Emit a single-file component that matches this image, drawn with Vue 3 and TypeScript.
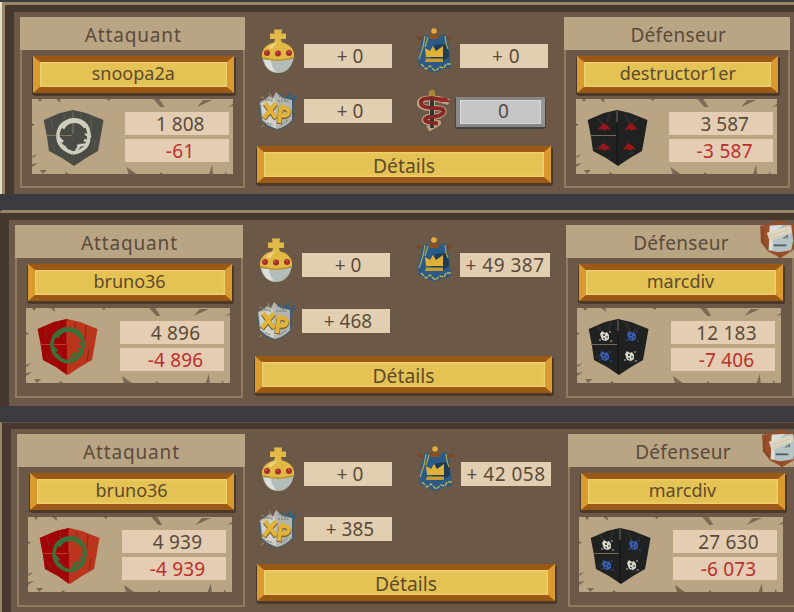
<template>
  <div class="reports">
    <svg class="sprites" aria-hidden="true">
      <symbol id="orb" viewBox="0 0 34 44">
        <path d="M1 26C2 38 9 44 17 44S32 38 33 26Z" fill="#b4bcba" />
        <path d="M3 31Q5 42 15 43Q10 37 10 31Z" fill="#dce0dc" />
        <path d="M1 24C3 17 9 13 17 13S31 17 33 24V29Q17 34 1 29Z" fill="#e0b843" />
        <path d="M13 14L14 10H9V4.500H13.500L13 .5H21L20.500 4.500H25V10H20L21 14Z" fill="#e3ba48" />
        <path d="M7 19Q11 14 17 14Q12 17 11 20Z" fill="#f0d580" />
        <path d="M1 28.500Q17 34 33 28.500" fill="none" stroke="#b7912e" stroke-width="1.5" />
        <circle cx="6" cy="24" r="3" fill="#a92c2c" />
        <circle cx="17" cy="24.5" r="3" fill="#a92c2c" />
        <circle cx="28" cy="24" r="3" fill="#a92c2c" />
        <path d="M4 22.500l2 1M15 23l2 1M27 22.500l2 1" stroke="#dd7169" />
      </symbol>
      <symbol id="xp" viewBox="0 0 40 42">
        <path d="M3 11Q0 19 4 31Q12 41 23 39Q35 34 36 26L36 12L40 5L32 8L34 1L26 8L24 4Z" fill="#385f75" />
        <path d="M2 12L8 9L11 6L15 8L18 2L22 6L25 8L34 10V30Q28 37 19 39Q9 36 4 30Z" fill="#b3b4ae" />
        <path d="M3 13L17 9L18 38Q8 35 5 29Z" fill="#d0d1ca" />
        <path d="M7 9l8 2M21 6l10 6M20 11h9M6 32l9 3M23 35l7-5" fill="none" stroke="#858985" stroke-width="1.5" stroke-dasharray="2 1" />
        <path d="M3 7l3 1M11 3l3 4M3 37l3-2" stroke="#8b8f89" />
        <path d="M7 14L18 29M18 14L6 29M23 18L21 34M21 18Q34 19 30 25Q27 28 23 26" fill="none" stroke="#7b6331" stroke-width="5" />
        <path d="M7 13L18 28M18 13L6 28M23 17L21 33M21 17Q34 18 30 24Q27 27 23 25" fill="none" stroke="#e2b336" stroke-width="4" />
      </symbol>
      <symbol id="banner" viewBox="0 0 36 45">
        <path d="M0 7L4 9H31L35 7V11L31 12H3L0 11Z" fill="#7b4726" />
        <path d="M6 7L13 8H22L28 6L31 14L34 37L33 40L26 41L18 45L10 42L2 38L1 29L4 17Z" fill="#2c5a86" />
        <path d="M18 17L31 16L32 29L25 34L13 33Z" fill="#1e3d52" />
        <path d="M8 8L6 19L2 31M11 9L8 19M28 8L29 15L31 21" fill="none" stroke="#a7a657" stroke-width="1.3" />
        <path d="M4 36L9 41L13 38L18 43L23 39L27 40L29 36L34 36" fill="none" stroke="#bcb452" stroke-width="1.4" stroke-dasharray="4 1" />
        <path d="M8 20L13 23L16 18L19 23L26 18V29H9Z" fill="#dfb137" />
        <path d="M9 30.500h17v3.500H8Z" fill="#c59b32" />
        <path d="M12 8Q18 5 22 8L21 11H13Z" fill="#925018" />
        <circle cx="17" cy="3" r="2.8" fill="#e5ae39" />
      </symbol>
      <symbol id="snake" viewBox="0 0 36 42">
        <path d="M15 3V38" stroke="#bfa284" stroke-width="6" />
        <path d="M32 13L21 10Q2 8 3 15Q4 19 17 19Q29 19 26 24Q23 28 11 28Q5 31 10 33L21 34L11 40" fill="none" stroke="#bfa284" stroke-width="6" stroke-linejoin="round" />
        <path d="M15 5V39" stroke="#25312e" stroke-width="3.500" />
        <path d="M24 10.500Q3 7 4 14Q4 18.500 17 19Q29 19 26 24Q23 28 11 28Q5 31 11 33L21 34.500" fill="none" stroke="#862825" stroke-width="4" />
        <path d="M20 8.500L29 8.500L34 13L23 13Z" fill="#932c28" />
        <path d="M15 13V17M15 22V26M15 30V32" stroke="#263632" stroke-width="3.500" />
        <circle cx="15" cy="4" r="3.2" fill="#a58736" />
      </symbol>
      <symbol id="wounded" viewBox="0 0 40 38">
        <path d="M0 5L9 3L19 0L30 3L40 5L39 22L34 30L21 38L8 31L1 22Z" fill="#99502a" />
        <path d="M3 7L2 21L8 28M20 38L20 31" fill="none" stroke="#834524" stroke-width="1.500" />
        <path d="M10 5L32 4L34 20L32 30L19 32L9 30Z" fill="#b5c3c5" />
        <path d="M10 5L24 4L13 12L13 30L9 30Z" fill="#d6dfdc" />
        <path d="M7 12L27 6L32 6V12L10 21Z" fill="#ddd6c0" />
        <path d="M8 16L29 9M10 19L27 13" stroke="#c6c0aa" stroke-width=".8" />
        <path d="M14 25H27" stroke="#4a5a60" stroke-width="1.800" />
        <path d="M24 18L28 15V18" fill="none" stroke="#6a7b80" stroke-width="1.500" />
      </symbol>
      <symbol id="cracks" viewBox="0 0 202 75">
        <path
          d="M6 0h4l-2 3ZM24 0l5 4-1-4ZM75 0h4l-2 2ZM122 0h6l5 8h-4ZM166 8l6-7h9ZM197 8l5-3v2ZM0 24l3 2-3 1ZM0 57l5-2-4 4ZM0 65l6-1-6 4ZM8 71h7l-4 4ZM34 73l3 2h-4ZM95 68l10 7h-8ZM130 73l1 2h-3ZM178 75l3-9 1 9ZM194 72l2 3h-2Z"
          fill="#7b6953"
        />
      </symbol>
    </svg>

    <section v-for="(report, i) in reports" :key="i" class="report" :class="'report-' + report.size">
      <div class="frame">
        <div class="card">
          <div class="title">Attaquant</div>
          <button class="gold">{{ report.attacker.name }}</button>
          <div class="parchment">
            <svg class="cracks" viewBox="0 0 202 75" preserveAspectRatio="none"><use href="#cracks" /></svg>
            <svg class="shield" viewBox="0 0 61 57">
              <path :d="shieldPath" :fill="report.attacker.arms === 'red' ? '#b9351c' : '#4b4b46'" />
              <path v-if="report.attacker.arms === 'red'" d="M.7 10L17 3L30 0V56L19 48L6 41L4 27Z" fill="#a00608" />
              <path d="M8 9l2 10M49 6l-1 14M38 3v10M12 41l-4-7M52 30l-2 12M21 3v8" :stroke="report.attacker.arms === 'red' ? '#86261a' : '#5b5b55'" />
              <path d="M3 25.5H29M30 2V24" :stroke="report.attacker.arms === 'red' ? '#c24c35' : '#8d8068'" stroke-width=".8" />
              <g fill="none" :stroke="report.attacker.arms === 'red' ? '#3b7039' : '#cfcebe'">
                <path d="M30 43Q14 38 15 24Q17 11 31 10Q45 11 46 24Q46 36 40 39Q35 43 30 43" stroke-width="3.500" />
                <path d="M19 18Q23 10.500 31 10.500Q39 10.500 43 17" stroke-width="5" />
                <path d="M15 27l5 5M17 34l6 4M42 24l6 3M41 30l6 2M34 36l11-2M33 41l5-7" stroke-width="2.500" />
              </g>
            </svg>
            <div class="counts">
              <div class="count">{{ report.attacker.troops }}</div>
              <div class="count lost">{{ report.attacker.losses }}</div>
            </div>
          </div>
        </div>

        <div class="middle">
          <div class="gains">
            <svg class="icon orb"><use href="#orb" /></svg>
            <div class="gain">+ 0</div>
            <svg class="icon banner"><use href="#banner" /></svg>
            <div class="gain wide">{{ report.glory }}</div>
            <svg class="icon xp"><use href="#xp" /></svg>
            <div class="gain">{{ report.xp }}</div>
            <template v-if="report.healed !== undefined">
              <svg class="icon snake"><use href="#snake" /></svg>
              <button class="silver">{{ report.healed }}</button>
            </template>
          </div>
          <button class="gold details">Détails</button>
        </div>

        <div class="card">
          <div class="title defender">Défenseur</div>
          <svg v-if="report.wounded" class="wounded"><use href="#wounded" /></svg>
          <button class="gold">{{ report.defender.name }}</button>
          <div class="parchment">
            <svg class="cracks" viewBox="0 0 202 75" preserveAspectRatio="none"><use href="#cracks" /></svg>
            <svg class="shield" viewBox="0 0 61 57">
              <path :d="shieldPath" fill="#202121" />
              <path d="M10 8l8 8M23 3l-3 9M51 8l-8 7M38 4l4 9M8 39l8-5M47 42l-6 2" stroke="#2e2f2d" stroke-width="2" />
              <path d="M3 25.5H29M30 1V12" stroke="#776b58" />
              <path d="M30 13V55" stroke="#111212" />
              <template v-if="report.defender.arms === 'bats'">
                <path
                  v-for="p in quarters"
                  :key="p.x + '-' + p.y"
                  :transform="`translate(${p.x} ${p.y})`"
                  d="M-7 3L-4 0L-1-4L1-3L4-1L7 3L3 2L1 4L-2 2Z"
                  fill="#981619"
                />
              </template>
              <template v-else>
                <g v-for="(p, q) in quarters" :key="q" :transform="`translate(${p.x} ${p.y})`" :fill="q === 0 || q === 3 ? '#d5d4c6' : '#385caf'">
                  <path d="M-5-2L-3-5L0-3L2-4L4-1L4 3L1 5L-3 4Z" />
                  <circle cx="-1" cy="-1" r="1" fill="#252726" />
                  <path d="M1 1h2M-2 2l2 1" stroke="#252726" />
                  <circle cx="5" cy="-4" r=".8" /><circle cx="-5" cy="4" r=".8" /><circle cx="6" cy="5" r=".8" />
                </g>
              </template>
            </svg>
            <div class="counts">
              <div class="count">{{ report.defender.troops }}</div>
              <div class="count lost">{{ report.defender.losses }}</div>
            </div>
          </div>
        </div>
      </div>
    </section>
  </div>
</template>

<script setup lang="ts">
interface Side {
  name: string
  troops: string
  losses: string
  arms: 'grey' | 'red' | 'bats' | 'skulls'
}

interface Report {
  size: string
  attacker: Side
  defender: Side
  glory: string
  xp: string
  healed?: number
  wounded: boolean
}

const shieldPath = 'M.7 10L17 3L30 0L43 3L60.5 10L57 30L55 41L43 48L31 56L19 48L6 41L4 27Z'

const quarters = [
  { x: 17, y: 17 },
  { x: 44, y: 17 },
  { x: 17, y: 37 },
  { x: 42, y: 37 },
]

const reports: Report[] = [
  {
    size: 'a',
    attacker: { name: 'snoopa2a', troops: '1 808', losses: '-61', arms: 'grey' },
    defender: { name: 'destructor1er', troops: '3 587', losses: '-3 587', arms: 'bats' },
    glory: '+ 0',
    xp: '+ 0',
    healed: 0,
    wounded: false,
  },
  {
    size: 'b',
    attacker: { name: 'bruno36', troops: '4 896', losses: '-4 896', arms: 'red' },
    defender: { name: 'marcdiv', troops: '12 183', losses: '-7 406', arms: 'skulls' },
    glory: '+ 49 387',
    xp: '+ 468',
    wounded: true,
  },
  {
    size: 'c',
    attacker: { name: 'bruno36', troops: '4 939', losses: '-4 939', arms: 'red' },
    defender: { name: 'marcdiv', troops: '27 630', losses: '-6 073', arms: 'skulls' },
    glory: '+ 42 058',
    xp: '+ 385',
    wounded: true,
  },
]
</script>

<style>
body {
  margin: 0;
  overflow: hidden;
}
</style>

<style scoped>
* {
  box-sizing: border-box;
}

.reports {
  width: 794px;
  height: 612px;
  padding-top: 2px;
  display: flex;
  flex-direction: column;
  gap: 16px;
  overflow: hidden;
  background: #3b3b41;
  color: #5b4b3a;
  font-family: 'Noto Sans', 'Open Sans', sans-serif;
  font-size: 19px;
}

.sprites {
  position: absolute;
  width: 0;
  height: 0;
}

.report {
  flex: none;
  height: 196px;
  border-top: 3px solid #998666;
  overflow: hidden;
}

.frame {
  height: 100%;
  display: flex;
  border-top: 7px solid #46382e;
  border-left: 9px solid #46382e;
  background: #6b5846;
  padding: 5px 0 0 5.5px;
}

/* each report is scaled a little differently */
.report-a {
  --card: 225.5px;
  --inner: 201px;
  --mid: 319px;
  --start: 12px;
  --col: 113px;
  --row: 55px;
  --details: 294px;
  height: 192px;
  border-left: 3px solid #998666;
  margin-left: 2px;
  box-shadow: -2px 0 #e6dfc8;
}

.report-b {
  --card: 228px;
  --inner: 204px;
  --mid: 323px;
  --start: 12.5px;
  --col: 115px;
  --row: 56px;
  --details: 297px;
  border-top-left-radius: 3px;
}

.report-c {
  --card: 228px;
  --inner: 204px;
  --mid: 323px;
  --start: 12.5px;
  --col: 114px;
  --row: 55.5px;
  --details: 298px;
  border-top: 1px solid #604f3b;
  border-left: 2px solid #998666;
}

.report-c .frame {
  border-top-width: 6px;
}

.card {
  position: relative;
  flex: none;
  width: var(--card);
  height: 171px;
  display: flex;
  flex-direction: column;
  align-items: center;
  box-shadow: inset 0 0 0 2px #8f7c60;
}

.report-b .card,
.report-c .card {
  height: 173px;
}

.title {
  width: 100%;
  height: 33px;
  padding: 1px 0 0 2px;
  line-height: 35px;
  text-align: center;
  letter-spacing: 0.85px;
  background: #b9a484;
}

.defender {
  padding-left: 3px;
  letter-spacing: 0.3px;
}

.gold {
  flex: none;
  width: var(--inner);
  height: 37px;
  margin: 6px 0 0 2px;
  padding: 0 0 2px;
  border: solid;
  border-width: 6px 7px;
  border-color: #9c5815 #d99b2d;
  background: #e5c254;
  box-shadow: inset 0 0 2px 1px #efd47a, -1px 2px #4b3a2c, 1px 3px #4b3a2c, 2px 2px #4b3a2c;
  color: #5d4a2d;
  font: inherit;
  font-size: 18px;
  line-height: 23px;
}

.parchment {
  position: relative;
  width: var(--inner);
  height: 75px;
  margin: 6px 0 0;
  padding: 12px 5px 0 11px;
  display: flex;
  justify-content: space-between;
  background: #b9a484;
}

.report-a .parchment {
  padding-right: 4px;
}

.report-b .parchment,
.report-c .parchment {
  margin: 7px 1px 0 0;
  padding-right: 6px;
}

.cracks {
  position: absolute;
  inset: 0;
  width: 100%;
  height: 100%;
}

.shield {
  position: relative;
  width: 61px;
  height: 57px;
  margin-top: -1px;
}

.counts {
  position: relative;
  display: grid;
  grid-template-rows: 23px 23px;
  gap: 3.5px;
  width: 104px;
  margin-top: 1px;
}

.count {
  padding-left: 7px;
  background: #e4cdb3;
  line-height: 24px;
  text-align: center;
  white-space: nowrap;
}

.report-b .count,
.report-c .count {
  letter-spacing: 0.2px;
}

.lost {
  color: #ba302d;
  letter-spacing: 0.35px;
}

.middle {
  flex: none;
  width: var(--mid);
  padding: 12px 0 0 var(--start);
}

.report-a .gains {
  position: relative;
  top: -1px;
}

.gains {
  display: grid;
  grid-template-columns: 47px var(--col) 43px 90px;
  grid-template-rows: var(--row) var(--row);
  align-items: center;
}

.gain {
  width: 88px;
  height: 24px;
  padding-left: 4px;
  background: #e2cfb1;
  line-height: 24px;
  text-align: center;
  white-space: nowrap;
}

.wide {
  width: 90px;
  padding-left: 0;
  letter-spacing: 0.5px;
}

.report-a .wide {
  width: 88px;
  padding-left: 4px;
}

.icon {
  display: block;
}

.orb {
  width: 34px;
  height: 44px;
  margin: -10px 0 0 4px;
}

.xp {
  width: 40px;
  height: 42px;
  margin-left: 1px;
}

.banner {
  width: 36px;
  height: 45px;
  margin-top: -11px;
}

.snake {
  width: 36px;
  height: 42px;
  margin-top: -1px;
}

.silver {
  width: 89px;
  height: 30px;
  margin: 2px 0 0 -4px;
  padding: 0 0 0 6px;
  border: solid;
  border-width: 3px 4px;
  border-color: #858585 #959595 #858585 #898989;
  background: #c6c6c6;
  box-shadow: inset 0 0 1px 1px #d8d8d8, 0 2px #4c443e, -1px 1px #4c443e, 1px 1px #4c443e;
  color: #4f4c46;
  font: inherit;
  line-height: 23px;
}

.details {
  display: block;
  width: var(--details);
  margin: 7px 0 0;
  padding: 1px 0 0;
  font-size: 19.3px;
}

.wounded {
  position: absolute;
  top: -5px;
  right: -5px;
  width: 39px;
  height: 39px;
}
</style>
